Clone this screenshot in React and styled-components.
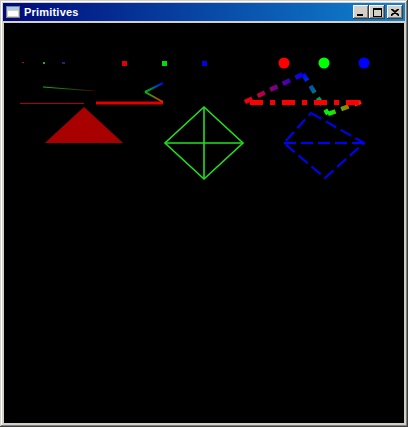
import React from 'react'
import styled, { createGlobalStyle } from 'styled-components'

const Global = createGlobalStyle`
  html, body {
    margin: 0;
    padding: 0;
    background: #d4d0c8;
  }
`

// classic raised frame
const Frame = styled.div`
  width: 408px;
  height: 427px;
  box-sizing: border-box;
  padding: 3px;
  display: flex;
  flex-direction: column;
  background: #d4d0c8;
  box-shadow:
    inset -1px -1px #404040,
    inset 1px 1px #d4d0c8,
    inset -2px -2px #808080,
    inset 2px 2px #ffffff;
`

const TitleBar = styled.div`
  height: 18px;
  flex: none;
  display: flex;
  align-items: center;
  padding: 0 2px 0 3px;
  background: linear-gradient(to right, #0a246a, #a6caf0);
  background: linear-gradient(to right, #000a7a 0%, #1084d0 100%);
`

const Title = styled.span`
  flex: 1;
  margin-left: 4px;
  color: #fff;
  font: bold 11px "Liberation Sans", Arial, sans-serif;
  letter-spacing: 0.2px;
`

const Buttons = styled.div`
  display: flex;
  align-items: center;
`

const CapButton = styled.div`
  width: 16px;
  height: 14px;
  box-sizing: border-box;
  margin-left: ${p => (p.$gap ? '2px' : '0')};
  display: flex;
  align-items: center;
  justify-content: center;
  background: #d4d0c8;
  box-shadow:
    inset -1px -1px #404040,
    inset 1px 1px #ffffff,
    inset -2px -2px #808080,
    inset 2px 2px #d4d0c8;
`

const Client = styled.div`
  flex: 1;
  margin: 2px 1px 1px 1px;
  background: #000;
  overflow: hidden;
`

const Canvas = styled.svg`
  display: block;
  width: 100%;
  height: 100%;
`

const AppIcon = () => (
  <svg width="14" height="12" viewBox="0 0 14 12">
    <rect x="0.5" y="0.5" width="13" height="11" fill="#d4d0c8" stroke="#808080" />
    <rect x="1" y="1" width="12" height="3" fill="#a6caf0" />
    <rect x="2" y="5" width="10" height="5" fill="#ffffff" />
  </svg>
)

// gradient segment helper
const Seg = ({ id, x1, y1, x2, y2, c1, c2, w, dash }) => (
  <>
    <defs>
      <linearGradient id={id} gradientUnits="userSpaceOnUse" x1={x1} y1={y1} x2={x2} y2={y2}>
        <stop offset="0" stopColor={c1} />
        <stop offset="1" stopColor={c2} />
      </linearGradient>
    </defs>
    <line x1={x1} y1={y1} x2={x2} y2={y2} stroke={`url(#${id})`} strokeWidth={w} strokeDasharray={dash} />
  </>
)

const Scene = () => (
  <Canvas viewBox="4 23 400 400" preserveAspectRatio="none">
    {/* points */}
    <rect x="22" y="62" width="2" height="1" fill="#a01818" />
    <rect x="43" y="62" width="2" height="2" fill="#30a030" />
    <rect x="62" y="62" width="3" height="2" fill="#202090" />
    <rect x="122" y="61" width="5" height="5" fill="#e00000" />
    <rect x="162" y="61" width="5" height="5" fill="#00e000" />
    <rect x="202" y="61" width="5" height="5" fill="#0000e0" />
    <circle cx="284" cy="63" r="5.5" fill="#ff0000" />
    <circle cx="324" cy="63" r="5.5" fill="#00ff00" />
    <circle cx="364" cy="63" r="5.5" fill="#0000ff" />

    {/* lines */}
    <line x1="20" y1="103.5" x2="84" y2="103.5" stroke="#b00000" strokeWidth="1" />
    <Seg id="g1" x1={43} y1={87} x2={95} y2={91} c1="#00c000" c2="#400000" w={1.2} />
    <line x1="96" y1="103" x2="163" y2="103" stroke="#e00000" strokeWidth="3" />
    <Seg id="s1" x1={163} y1={83} x2={145} y2={92} c1="#0000ff" c2="#00c000" w={2} />
    <Seg id="s2" x1={145} y1={92} x2={163} y2={102} c1="#00c000" c2="#e03000" w={2} />

    {/* stippled strip */}
    <Seg id="d1" x1={245} y1={102} x2={303} y2={74} c1="#ff0000" c2="#0000ff" w={4.5} dash="8 6" />
    <Seg id="d2" x1={303} y1={74} x2={328} y2={114} c1="#0000ff" c2="#00ff00" w={4.5} dash="8 6" />
    <Seg id="d3" x1={328} y1={114} x2={361} y2={102} c1="#00ff00" c2="#ff2000" w={4.5} dash="8 6" />
    <line x1="250" y1="102.5" x2="362" y2="102.5" stroke="#ff0000" strokeWidth="5" strokeDasharray="13 7 5 7" />

    {/* filled triangle */}
    <polygon points="84,107 123,143 45,143" fill="#a80000" />

    {/* wire diamond */}
    <g stroke="#20e020" strokeWidth="1.6" fill="none">
      <polygon points="204,107 243,143 204,179 165,143" />
      <line x1="204" y1="107" x2="204" y2="179" />
      <line x1="165" y1="143" x2="243" y2="143" />
    </g>

    {/* dashed diamond */}
    <g stroke="#0000ff" strokeWidth="2" fill="none" strokeDasharray="12 5">
      <polygon points="311,113 364,143 325,178 284,143" />
      <line x1="284" y1="143" x2="364" y2="143" />
    </g>
  </Canvas>
)

const App = () => (
  <>
    <Global />
    <Frame>
      <TitleBar>
        <AppIcon />
        <Title>Primitives</Title>
        <Buttons>
          <CapButton>
            <svg width="8" height="7" viewBox="0 0 8 7">
              <rect x="0" y="5" width="6" height="2" fill="#000" />
            </svg>
          </CapButton>
          <CapButton>
            <svg width="9" height="9" viewBox="0 0 9 9">
              <rect x="0.5" y="0.5" width="8" height="8" fill="none" stroke="#000" />
              <rect x="0" y="0" width="9" height="2" fill="#000" />
            </svg>
          </CapButton>
          <CapButton $gap>
            <svg width="8" height="7" viewBox="0 0 8 7">
              <path d="M0 0 L8 7 M8 0 L0 7 M1 0 L8 6 M7 0 L0 6" stroke="#000" strokeWidth="1.2" />
            </svg>
          </CapButton>
        </Buttons>
      </TitleBar>
      <Client>
        <Scene />
      </Client>
    </Frame>
  </>
)

export default App
